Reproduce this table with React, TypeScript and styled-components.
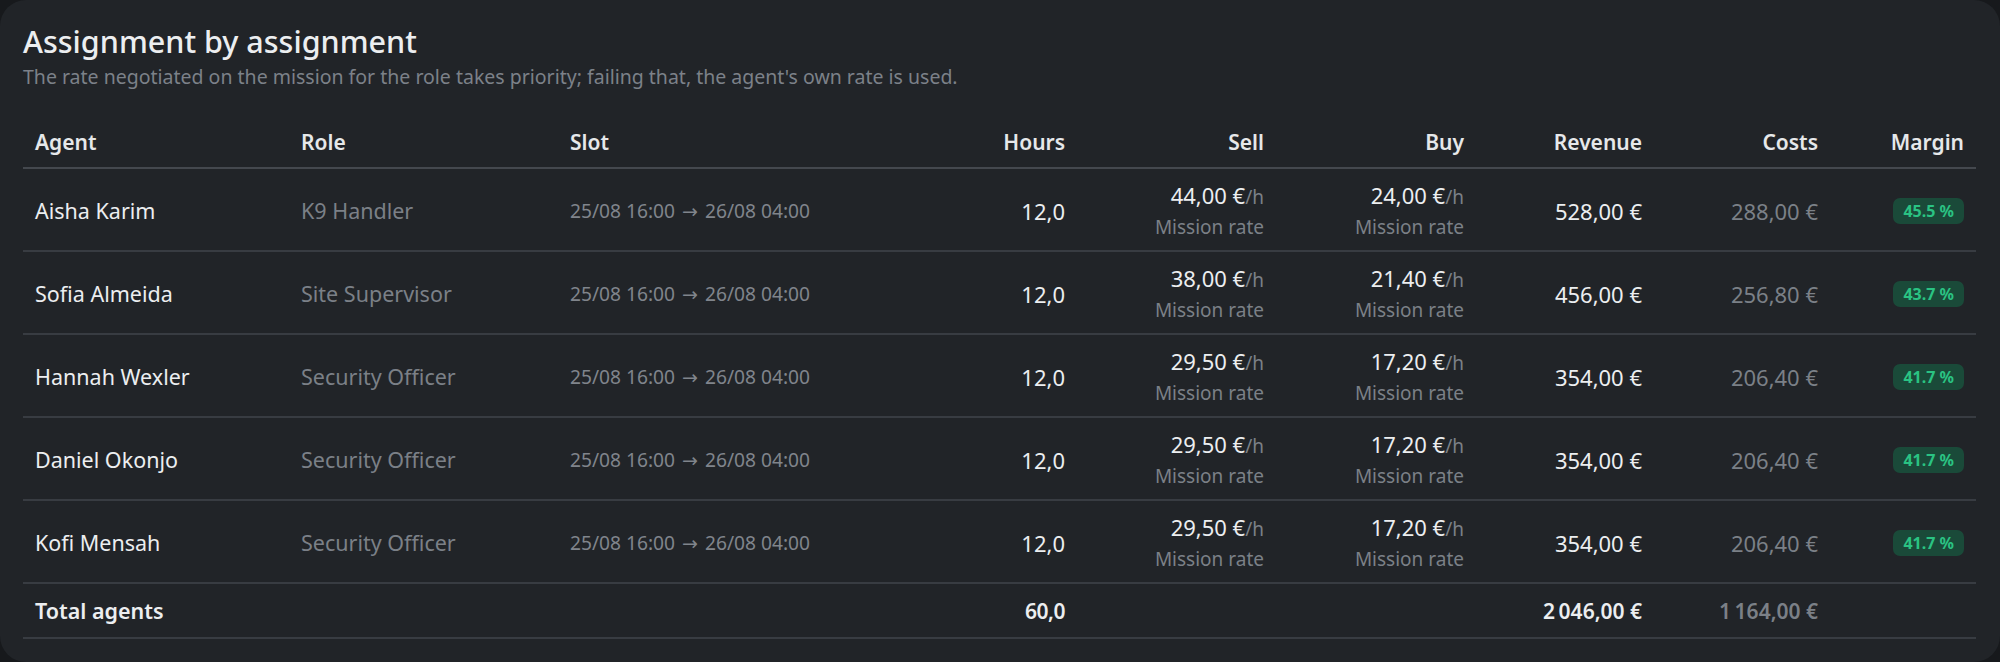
import React from "react";
import styled, { createGlobalStyle, css } from "styled-components";

const GlobalStyle = createGlobalStyle`
  html, body {
    margin: 0;
    padding: 0;
    background: #17191c;
  }
  body {
    font-family: "Noto Sans", "Open Sans", sans-serif;
    color: #e9eaec;
  }
`;

const Card = styled.section`
  box-sizing: border-box;
  width: 2000px;
  height: 662px;
  background: #212428;
  border-radius: 26px;
  padding: 21px 24px 0 23px;
`;

const Title = styled.h2`
  margin: 0;
  font-size: 30.5px;
  line-height: 40px;
  font-weight: 500;
  color: #eceef0;
`;

const Subtitle = styled.p`
  margin: 3px 0 0;
  font-size: 19.5px;
  line-height: 26px;
  color: #7c8189;
`;

const Table = styled.div`
  margin-top: 27px;
`;

const cols = "266px 269px 1fr 197px 199px 200px 178px 176px 146px";

const Row = styled.div<{ kind: "head" | "body" | "total" }>`
  box-sizing: border-box;
  display: grid;
  grid-template-columns: ${cols};
  align-items: center;
  border-bottom: 2px solid #383c42;
  ${({ kind }) =>
    kind === "head"
      ? css`
          height: 52px;
          border-bottom-color: #44484e;
        `
      : kind === "total"
      ? css`
          height: 55px;
        `
      : css`
          height: 83px;
          padding-top: 2px;
        `}
`;

const Cell = styled.div<{ right?: boolean }>`
  box-sizing: border-box;
  padding: 0 12px;
  white-space: nowrap;
  text-align: ${({ right }) => (right ? "right" : "left")};
`;

const HeadCell = styled(Cell)`
  font-size: 21px;
  font-weight: 600;
  color: #e6e8ea;
`;

const Name = styled(Cell)<{ bold?: boolean }>`
  font-size: 21.5px;
  color: #eceef0;
  font-weight: ${({ bold }) => (bold ? 600 : 400)};
`;

const Muted = styled(Cell)`
  font-size: 21.5px;
  color: #7b8087;
`;

const Slot = styled(Cell)`
  font-size: 19.2px;
  color: #80858c;
`;

const Arrow = styled.span`
  font-family: "DejaVu Sans", sans-serif;
  font-size: 19px;
  margin: 0 2px;
`;

const Amount = styled(Cell)<{ dim?: boolean }>`
  font-size: 22px;
  color: ${({ dim }) => (dim ? "#7b8087" : "#eceef0")};
`;

const TotalAmount = styled(Amount)`
  font-size: 21px;
  font-weight: 600;
  letter-spacing: -0.5px;
`;

const Rate = styled(Cell)`
  display: flex;
  flex-direction: column;
  align-items: flex-end;
  gap: 3px;
`;

const RateValue = styled.div`
  font-size: 22px;
  line-height: 28px;
  color: #eceef0;
  & > span {
    font-size: 19px;
    color: #7b8087;
  }
`;

const RateSource = styled.div`
  font-size: 19px;
  line-height: 26px;
  color: #7b8087;
`;

const Badge = styled.span`
  display: inline-block;
  padding: 0 10px;
  height: 26px;
  line-height: 26px;
  border-radius: 7px;
  background: #1a4a39;
  color: #2ac383;
  font-size: 16px;
  font-weight: 700;
`;

interface Assignment {
  agent: string;
  role: string;
  from: string;
  to: string;
  hours: string;
  sell: string;
  buy: string;
  revenue: string;
  costs: string;
  margin: string;
}

const rows: Assignment[] = [
  { agent: "Aisha Karim", role: "K9 Handler", from: "25/08 16:00", to: "26/08 04:00", hours: "12,0", sell: "44,00 €", buy: "24,00 €", revenue: "528,00 €", costs: "288,00 €", margin: "45.5 %" },
  { agent: "Sofia Almeida", role: "Site Supervisor", from: "25/08 16:00", to: "26/08 04:00", hours: "12,0", sell: "38,00 €", buy: "21,40 €", revenue: "456,00 €", costs: "256,80 €", margin: "43.7 %" },
  { agent: "Hannah Wexler", role: "Security Officer", from: "25/08 16:00", to: "26/08 04:00", hours: "12,0", sell: "29,50 €", buy: "17,20 €", revenue: "354,00 €", costs: "206,40 €", margin: "41.7 %" },
  { agent: "Daniel Okonjo", role: "Security Officer", from: "25/08 16:00", to: "26/08 04:00", hours: "12,0", sell: "29,50 €", buy: "17,20 €", revenue: "354,00 €", costs: "206,40 €", margin: "41.7 %" },
  { agent: "Kofi Mensah", role: "Security Officer", from: "25/08 16:00", to: "26/08 04:00", hours: "12,0", sell: "29,50 €", buy: "17,20 €", revenue: "354,00 €", costs: "206,40 €", margin: "41.7 %" },
];

function RateCell({ value }: { value: string }) {
  return (
    <Rate right>
      <RateValue>
        {value}
        <span>/h</span>
      </RateValue>
      <RateSource>Mission rate</RateSource>
    </Rate>
  );
}

export default function App() {
  return (
    <>
      <GlobalStyle />
      <Card>
        <Title>Assignment by assignment</Title>
        <Subtitle>
          The rate negotiated on the mission for the role takes priority; failing that, the agent's own rate is used.
        </Subtitle>
        <Table>
          <Row kind="head">
            <HeadCell>Agent</HeadCell>
            <HeadCell>Role</HeadCell>
            <HeadCell>Slot</HeadCell>
            <HeadCell right>Hours</HeadCell>
            <HeadCell right>Sell</HeadCell>
            <HeadCell right>Buy</HeadCell>
            <HeadCell right>Revenue</HeadCell>
            <HeadCell right>Costs</HeadCell>
            <HeadCell right>Margin</HeadCell>
          </Row>
          {rows.map((r) => (
            <Row kind="body" key={r.agent}>
              <Name>{r.agent}</Name>
              <Muted>{r.role}</Muted>
              <Slot>
                {r.from} <Arrow>→</Arrow> {r.to}
              </Slot>
              <Amount right>{r.hours}</Amount>
              <RateCell value={r.sell} />
              <RateCell value={r.buy} />
              <Amount right>{r.revenue}</Amount>
              <Amount right dim>{r.costs}</Amount>
              <Cell right>
                <Badge>{r.margin}</Badge>
              </Cell>
            </Row>
          ))}
          <Row kind="total">
            <Name bold>Total agents</Name>
            <Cell />
            <Cell />
            <TotalAmount right>60,0</TotalAmount>
            <Cell />
            <Cell />
            <TotalAmount right>{"2\u202f046,00 €"}</TotalAmount>
            <TotalAmount right dim>{"1\u202f164,00 €"}</TotalAmount>
            <Cell />
          </Row>
        </Table>
      </Card>
    </>
  );
}
